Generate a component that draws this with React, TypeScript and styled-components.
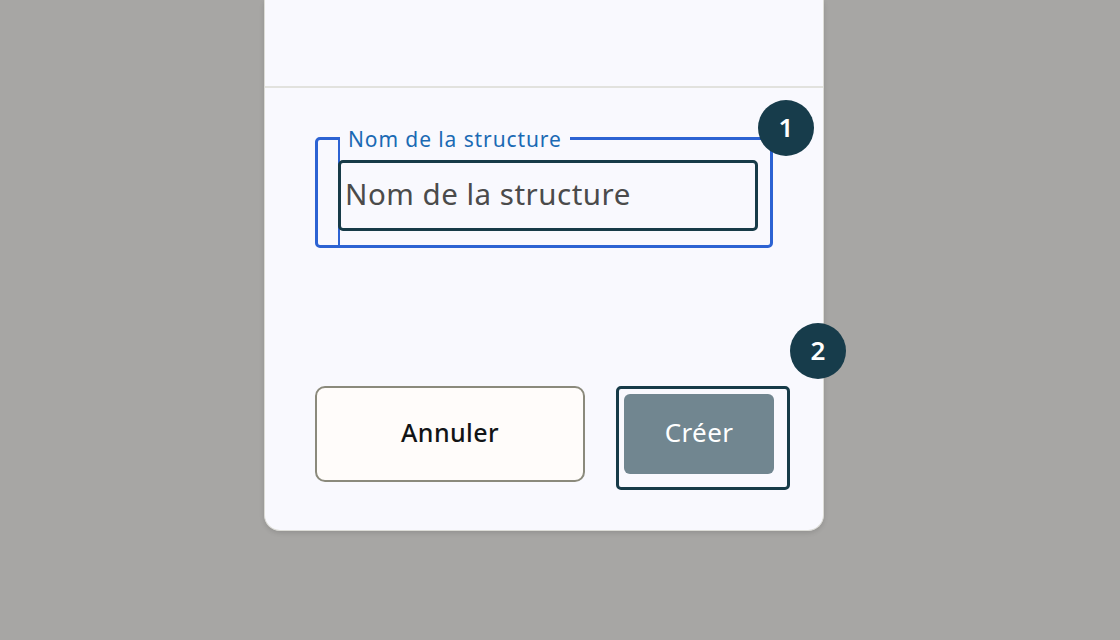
import styled, { createGlobalStyle } from "styled-components";

const GlobalStyle = createGlobalStyle`
	html, body {
		margin: 0;
		padding: 0;
		background: #a7a6a4;
		font-family: "Noto Sans", "Liberation Sans", sans-serif;
	}
`;

const Page = styled.div`
	width: 1120px;
	height: 640px;
	overflow: hidden;
`;

const Panel = styled.div`
	width: 558px;
	margin-left: 264px;
	background: #f9f9fe;
	border: 1px solid #dcdcd7;
	border-top: none;
	border-radius: 0 0 16px 16px;
	box-shadow: 0 2px 5px rgba(0, 0, 0, 0.12);
`;

const Header = styled.div`
	height: 86px;
	border-bottom: 2px solid #e2e2de;
`;

const Body = styled.div`
	padding: 49px 50px 48px 50px;
`;

const Group = styled.div`
	position: relative;
	border: 3px solid #2d63d3;
	border-radius: 5px;
	padding: 0 12px 0 20px;
	height: 105px;
`;

const Column = styled.div`
	display: flex;
	flex-direction: column;
	height: 100%;
	box-sizing: border-box;
	border-left: 2px solid #2d63d3;
`;

const LegendRow = styled.div`
	display: flex;
	margin-top: -13.5px;
	height: 24px;
`;

const Legend = styled.span`
	background: #f9f9fe;
	padding: 0 8px;
	font-size: 21px;
	line-height: 24px;
	letter-spacing: 0.9px;
	color: #1b6ab4;
`;

const Input = styled.input`
	display: block;
	box-sizing: border-box;
	margin: 9.5px 0 0 -2px;
	width: 420px;
	height: 71px;
	padding: 0 0 5px 4px;
	border: 3px solid #173b48;
	border-radius: 5px;
	background: #f9f9fe;
	font-family: inherit;
	font-size: 29.5px;
	letter-spacing: 0.5px;
	color: #222;
	outline: none;

	&::placeholder {
		color: #4b4b4b;
	}
`;

const Badge = styled.div<{ $top: number; $right: number }>`
	position: absolute;
	top: ${(p) => p.$top}px;
	right: ${(p) => p.$right}px;
	width: 56px;
	height: 56px;
	border-radius: 50%;
	background: #173c4b;
	color: #fff;
	display: flex;
	align-items: center;
	justify-content: center;
	font-size: 26px;
	font-weight: 600;
	padding-bottom: 2px;
	box-sizing: border-box;
`;

const Actions = styled.div`
	margin-top: 138px;
	display: flex;
	align-items: center;
	justify-content: space-between;
`;

const CancelButton = styled.button`
	width: 270px;
	height: 96px;
	box-sizing: border-box;
	padding: 0 0 5px;
	border: 2px solid #8b8a7c;
	border-radius: 10px;
	background: #fffcfa;
	color: #121416;
	font-family: inherit;
	font-size: 25px;
	font-weight: 500;
	letter-spacing: 0.4px;
`;

const SubmitWrap = styled.div`
	position: relative;
	margin-right: -1px;
`;

const SubmitButton = styled.button`
	display: block;
	width: 150px;
	height: 80px;
	padding: 0 0 4px;
	border: none;
	border-radius: 6px;
	background: #718690;
	color: #fff;
	font-family: inherit;
	font-size: 26px;
	font-weight: 400;
	letter-spacing: 0.4px;
`;

const FocusRing = styled.div`
	position: absolute;
	inset: -8px -16px -16px -8px;
	border: 3px solid #173b48;
	border-radius: 5px;
	pointer-events: none;
`;

export default function App() {
	return (
		<Page>
			<GlobalStyle />
			<Panel>
				<Header />
				<Body>
					<Group>
						<Column>
							<LegendRow>
								<Legend>Nom de la structure</Legend>
							</LegendRow>
							<Input placeholder="Nom de la structure" />
						</Column>
						<Badge $top={-40} $right={-44}>
							1
						</Badge>
					</Group>
					<Actions>
						<CancelButton>Annuler</CancelButton>
						<SubmitWrap>
							<SubmitButton>Créer</SubmitButton>
							<FocusRing />
							<Badge $top={-71} $right={-72}>
								2
							</Badge>
						</SubmitWrap>
					</Actions>
				</Body>
			</Panel>
		</Page>
	);
}
